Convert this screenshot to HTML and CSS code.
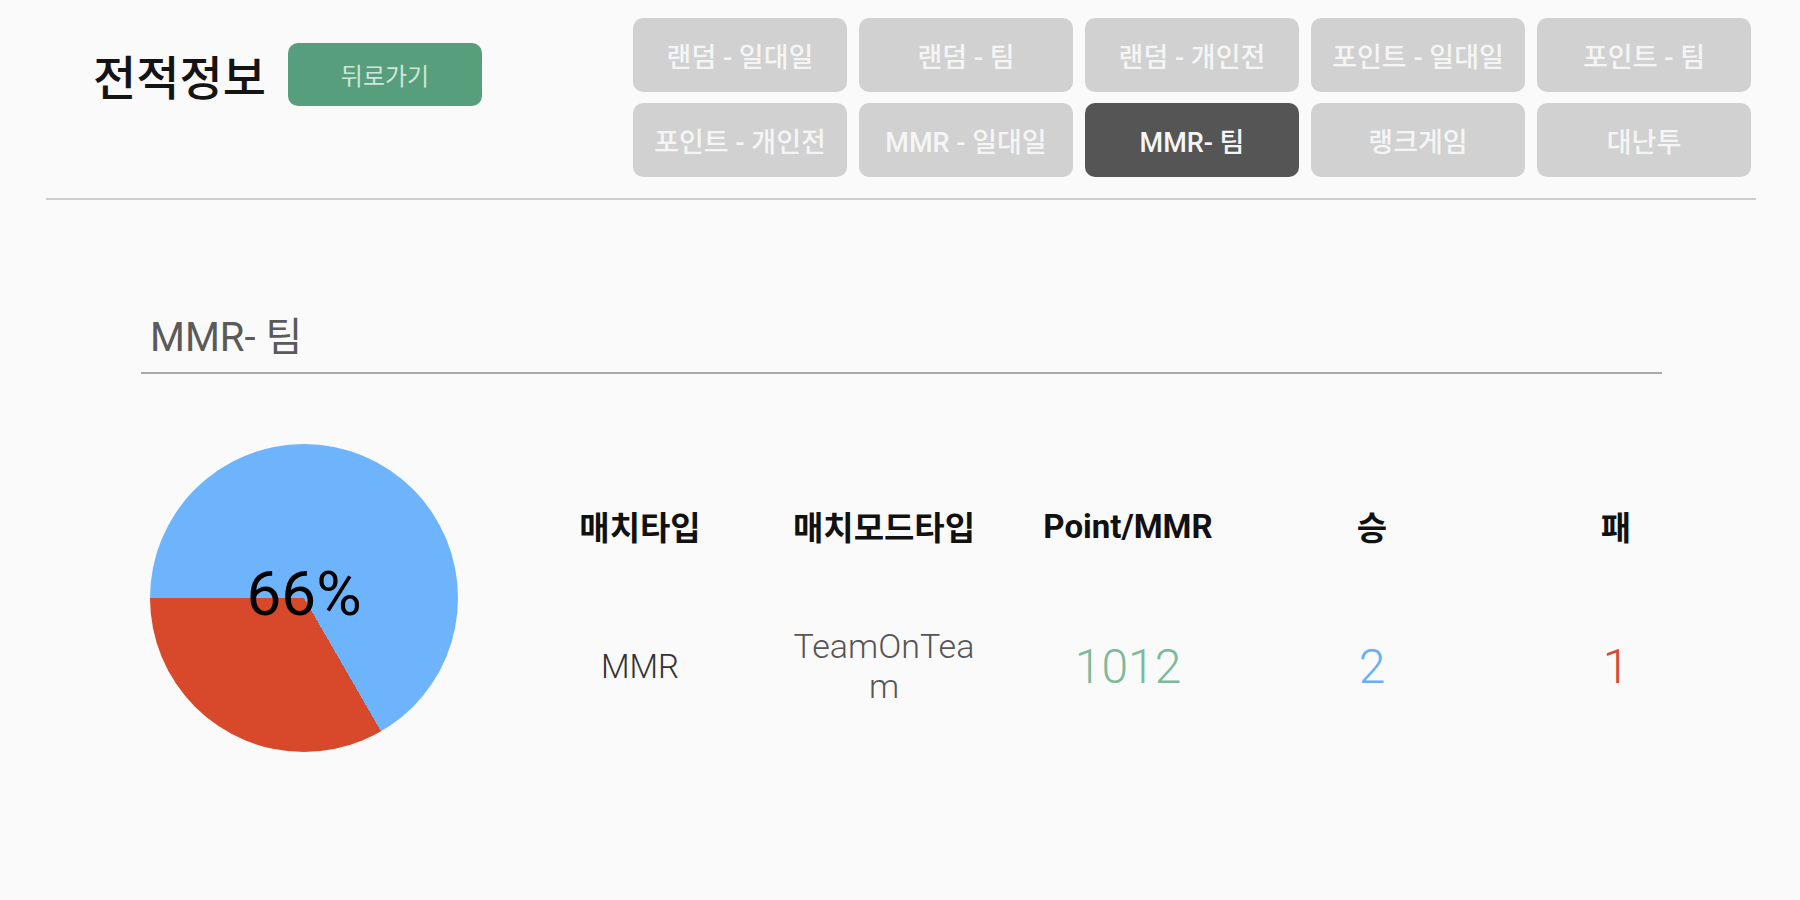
FILE: index.html
```html
<!DOCTYPE html>
<html lang="ko">
<head>
<meta charset="utf-8">
<title>전적정보</title>
<link rel="stylesheet" href="styles.css">
</head>
<body>
<div class="page">
  <header class="header">
    <div class="title-group">
      <h1 class="title">전적정보</h1>
      <button class="back-btn">뒤로가기</button>
    </div>
    <nav class="tabs">
      <button class="tab">랜덤 - 일대일</button>
      <button class="tab">랜덤 - 팀</button>
      <button class="tab">랜덤 - 개인전</button>
      <button class="tab">포인트 - 일대일</button>
      <button class="tab">포인트 - 팀</button>
      <button class="tab">포인트 - 개인전</button>
      <button class="tab">MMR - 일대일</button>
      <button class="tab tab-active">MMR- 팀</button>
      <button class="tab">랭크게임</button>
      <button class="tab">대난투</button>
    </nav>
  </header>

  <section class="record">
    <h2 class="record-title">MMR- 팀</h2>
    <div class="record-body">
      <div class="pie">
        <span class="pie-label">66%</span>
      </div>
      <div class="stats">
        <div class="cell head">매치타입</div>
        <div class="cell head">매치모드타입</div>
        <div class="cell head">Point/MMR</div>
        <div class="cell head">승</div>
        <div class="cell head">패</div>
        <div class="cell val-type">MMR</div>
        <div class="cell val-mode"><span class="wrap">TeamOnTeam</span></div>
        <div class="cell val-num val-point">1012</div>
        <div class="cell val-num val-win">2</div>
        <div class="cell val-num val-lose">1</div>
      </div>
    </div>
  </section>
</div>
</body>
</html>
```

FILE: styles.css
```css
* { box-sizing: border-box; }

html, body {
  margin: 0;
  padding: 0;
  background: #fafafa;
}

body {
  font-family: "Roboto", "Noto Sans CJK KR", sans-serif;
  color: #111;
}

.page {
  padding: 18px 44px 0 46px;
}

.header {
  display: flex;
  justify-content: space-between;
  align-items: flex-start;
  padding: 0 5px 21px 47px;
  border-bottom: 2px solid #cdcdcd;
}

.title-group {
  display: flex;
  align-items: center;
  gap: 22px;
  margin-top: 25px;
}

.title {
  margin: 0;
  font-size: 47px;
  font-weight: 500;
  line-height: 63px;
  letter-spacing: 0;
  color: #141414;
  font-family: "Noto Sans CJK KR", sans-serif;
}

.back-btn {
  width: 194px;
  height: 63px;
  border: none;
  border-radius: 10px;
  background: #579e7d;
  color: #cfe6da;
  font-family: "Noto Sans CJK KR", sans-serif;
  font-size: 24px;
  padding: 0;
}

.tabs {
  display: grid;
  grid-template-columns: repeat(5, 214px);
  grid-auto-rows: 74px;
  gap: 11px 12px;
}

.tab {
  border: none;
  border-radius: 10px;
  background: #d1d1d1;
  color: #f5f5f5;
  font-family: "Roboto", "Noto Sans CJK KR", sans-serif;
  font-size: 27px;
  font-weight: 500;
  padding: 0;
  white-space: nowrap;
}

.tab-active {
  background: #555555;
  color: #f5f5f5;
}

.record {
  margin: 118px 0 0 95px;
}

.record-title {
  margin: 0 94px 0 0;
  padding: 0 0 14px 9px;
  font-size: 40px;
  line-height: 40px;
  font-weight: 400;
  color: #5a5a5a;
  border-bottom: 2px solid #a9a9a9;
}

.record-body {
  display: flex;
  align-items: flex-start;
  gap: 60px;
  margin-top: 70px;
  padding-left: 9px;
}

.pie {
  width: 308px;
  height: 308px;
  flex: none;
  border-radius: 50%;
  background: conic-gradient(#6db4fc 0deg 150deg, #d8492b 150deg 270deg, #6db4fc 270deg 360deg);
  display: flex;
  align-items: center;
  justify-content: center;
}

.pie-label {
  font-size: 62px;
  line-height: 1;
  color: #000;
  margin-top: -8px;
}

.stats {
  display: grid;
  grid-template-columns: repeat(5, 244px);
  grid-template-rows: 80px 80px;
  row-gap: 60px;
  margin-top: 42px;
}

.cell {
  display: flex;
  align-items: center;
  justify-content: center;
  text-align: center;
}

.head {
  font-size: 33px;
  font-weight: 700;
  color: #111;
}

.val-type {
  font-size: 33px;
  font-weight: 300;
  color: #333;
}

.val-mode {
  font-size: 34px;
  font-weight: 300;
  color: #555;
}

.wrap {
  display: block;
  max-width: 200px;
  word-break: break-all;
  line-height: 40px;
}

.val-num {
  font-size: 48px;
  font-weight: 300;
}

.val-point { color: #7cba9b; }
.val-win { color: #67b0f7; }
.val-lose { color: #d9492c; }
```
